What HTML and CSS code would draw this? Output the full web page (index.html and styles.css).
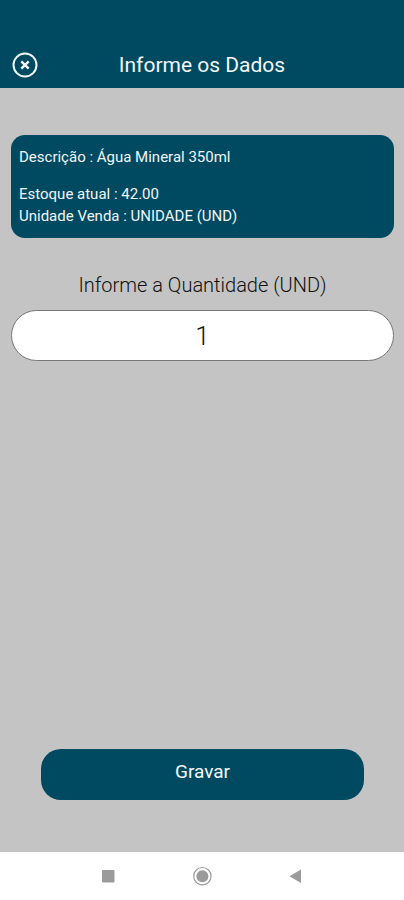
FILE: index.html
```html
<!DOCTYPE html>
<html lang="pt-BR">
<head>
<meta charset="utf-8">
<meta name="viewport" content="width=device-width, initial-scale=1">
<title>Informe os Dados</title>
<link rel="stylesheet" href="styles.css">
</head>
<body>
<header class="topbar">
  <button class="close" type="button" aria-label="Fechar">
    <svg viewBox="0 0 26 26" fill="none" stroke="currentColor" stroke-width="2"><circle cx="13" cy="13" r="11.5"/><path d="M9.3 9.3l7.4 7.4M16.7 9.3l-7.4 7.4" stroke-width="2.4"/></svg>
  </button>
  <h1 class="title">Informe os Dados</h1>
</header>
<main class="content">
  <section class="card">
    <p class="description">Descrição : Água Mineral 350ml</p>
    <p>Estoque atual : 42.00</p>
    <p>Unidade Venda : UNIDADE (UND)</p>
  </section>
  <label class="label" for="quantity">Informe a Quantidade (UND)</label>
  <input class="quantity" id="quantity" type="text" inputmode="numeric" value="1">
  <button class="save" type="button">Gravar</button>
</main>
<nav class="system">
  <button class="key" type="button" aria-label="Recentes"><svg viewBox="0 0 20 20"><rect x="4" y="4" width="12.5" height="12.5" rx="1"/></svg></button>
  <button class="key" type="button" aria-label="Início"><svg viewBox="0 0 20 20"><circle cx="10.4" cy="10.2" r="8.7" fill="none" stroke="currentColor" stroke-width="1.2"/><circle cx="10.4" cy="10.2" r="6"/></svg></button>
  <button class="key" type="button" aria-label="Voltar"><svg viewBox="0 0 20 20"><path d="M15 3.5v13.5L3.5 10.2z"/></svg></button>
</nav>
</body>
</html>
```
FILE: styles.css
```css
* {
  box-sizing: border-box;
}

body {
  margin: 0;
  min-height: 100vh;
  display: flex;
  flex-direction: column;
  background: #c4c4c4;
  color: #111;
  font-family: Roboto, "Liberation Sans", sans-serif;
}

button,
input {
  font: inherit;
}

button {
  padding: 0;
  border: 0;
  cursor: pointer;
}

svg {
  display: block;
  width: 100%;
  height: 100%;
}

.topbar {
  display: grid;
  grid-template-columns: 26px 1fr 26px;
  align-items: center;
  padding: 52px 12px 10px;
  background: #004a61;
  color: #f4f7fc;
}

.close {
  width: 26px;
  height: 26px;
  background: none;
  color: inherit;
}

.title {
  margin: 0;
  font-size: 21px;
  line-height: 26px;
  font-weight: 400;
  text-align: center;
}

.content {
  flex: 1;
  display: flex;
  flex-direction: column;
  padding: 47px 10px 52px 11px;
}

.card {
  padding: 11px 8px;
  border-radius: 14px;
  background: #004a61;
  color: #f0f5fa;
  font-size: 15px;
  line-height: 22px;
}

.card p {
  margin: 0;
}

.card .description {
  margin-bottom: 15px;
}

.label {
  margin: 34px 0 12px;
  font-size: 20px;
  line-height: 26px;
  font-weight: 300;
  text-align: center;
}

.quantity {
  width: 100%;
  height: 51px;
  padding: 0 24px;
  border: 1px solid #777;
  border-radius: 26px;
  background: #fff;
  color: #111;
  font-size: 26px;
  font-weight: 300;
  text-align: center;
}

.save {
  height: 51px;
  margin: auto 30px 0;
  padding-bottom: 6px;
  border-radius: 20px;
  background: #004a61;
  color: #f4f7fc;
  font-size: 19px;
}

.system {
  display: flex;
  justify-content: center;
  gap: 74px;
  padding: 14px 0;
  background: #fff;
}

.key {
  width: 20px;
  height: 20px;
  background: none;
  color: #9b9b9b;
}

.key svg {
  fill: currentColor;
}
```
